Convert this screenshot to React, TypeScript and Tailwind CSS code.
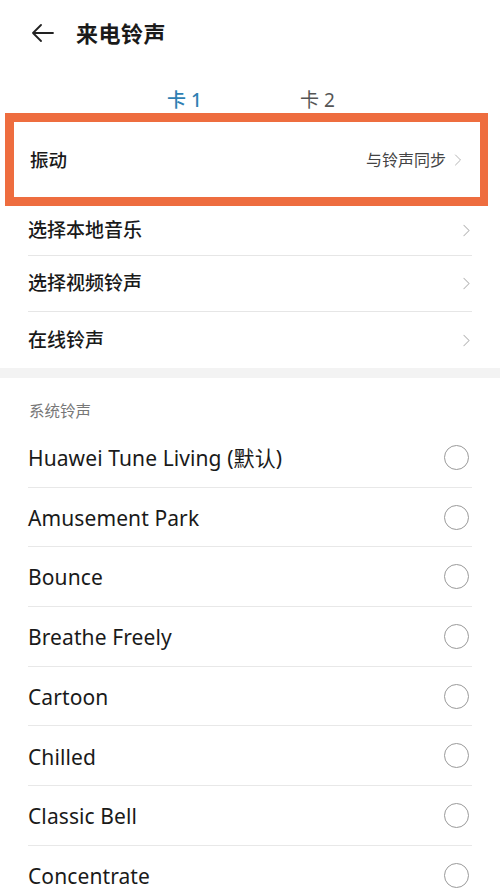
import { ChevronRight } from "lucide-react";

const font = { fontFamily: '"Noto Sans", "Noto Sans CJK SC", sans-serif' };

const menuRows = [
  { label: "选择本地音乐", h: "h-[50px]" },
  { label: "选择视频铃声", h: "h-[56px]" },
  { label: "在线铃声", h: "h-[56px]" },
];

const tones = [
  "Huawei Tune Living (默认)",
  "Amusement Park",
  "Bounce",
  "Breathe Freely",
  "Cartoon",
  "Chilled",
  "Classic Bell",
  "Concentrate",
];

const App = () => {
  return (
    <div
      className="w-[500px] h-[894px] overflow-hidden bg-white text-[#1a1a1a]"
      style={font}
    >
      <header className="h-[66px] flex items-center pl-[31px]">
        <svg width="23" height="18" viewBox="0 0 23 18" fill="none">
          <path
            d="M22 9H2M10 1L2 9L10 17"
            stroke="#222"
            strokeWidth="1.8"
            strokeLinecap="round"
            strokeLinejoin="round"
          />
        </svg>
        <h1 className="ml-[22px] text-[22px] font-semibold tracking-[0.5px]">来电铃声</h1>
      </header>

      <div className="h-[47px] flex items-start pt-[22px] leading-[24px]">
        <div className="w-[250px] pl-[167px]">
          <span className="text-[19px] text-[#2f7fb3] font-medium">卡 1</span>
        </div>
        <div className="w-[250px] pl-[50px]">
          <span className="text-[19px] text-[#555]">卡 2</span>
        </div>
      </div>

      <div className="mx-[5px] w-[483px] h-[93px] border-[9px] border-[#ee6d3f] border-r-[8px] flex items-center justify-between pl-[16px] pr-[12px]">
        <span className="text-[18.5px] font-medium">振动</span>
        <div className="flex items-center gap-[2px] text-[#444]">
          <span className="text-[16px]">与铃声同步</span>
          <ChevronRight size={20} strokeWidth={1.2} className="text-[#b5b5b5]" />
        </div>
      </div>

      <div className="px-[28px]">
        {menuRows.map((row, idx) => (
          <div
            key={row.label}
            className={`${row.h} flex items-center justify-between ${
              idx < menuRows.length - 1 ? "border-b border-[#e6e6e6]" : ""
            }`}
          >
            <span className="text-[19px] font-medium">{row.label}</span>
            <ChevronRight size={21} strokeWidth={1.2} className="text-[#b5b5b5] mr-[-5px]" />
          </div>
        ))}
      </div>

      <div className="h-[10px] bg-[#f3f3f3]" />

      <div className="h-[50px] pl-[29px] pt-[22px] text-[15.5px] text-[#777]">系统铃声</div>

      <div className="px-[28px]">
        {tones.map((tone) => (
          <div
            key={tone}
            className="h-[59.7px] flex items-center justify-between border-b border-[#e8e8e8]"
          >
            <span className="text-[21px] tracking-[0.1px] pt-[3px]">{tone}</span>
            <span className="w-[25px] h-[25px] rounded-full border-[1.5px] border-[#9a9a9a] mr-[3px]" />
          </div>
        ))}
      </div>
    </div>
  );
};

export default App;
